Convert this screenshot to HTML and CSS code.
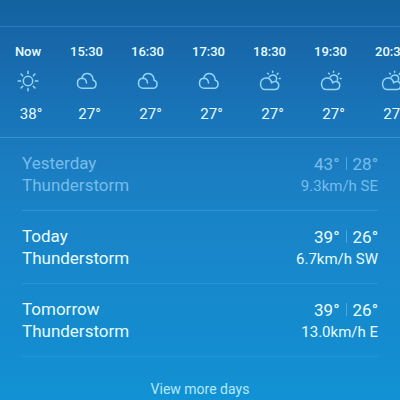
FILE: index.html
```
<!DOCTYPE html>
<html lang="en">
<head>
    <meta charset="UTF-8">
    <meta name="viewport" content="width=device-width, initial-scale=1.0">
    <title>Weather</title>
    <link rel="stylesheet" href="styles.css">
</head>
<body>
    <!-- Icons shared by the hourly forecast -->
    <svg class="icon-defs" aria-hidden="true">
        <symbol id="sun" viewBox="0 0 24 24">
            <circle cx="12" cy="12" r="4.7"/>
            <path d="M12 2.2v2.4M12 19.4v2.4M2.2 12h2.4M19.4 12h2.4M5.1 5.1l1.6 1.6M17.3 17.3l1.6 1.6M5.1 18.9l1.6-1.6M17.3 6.7l1.6-1.6"/>
        </symbol>
        <symbol id="cloud" viewBox="0 0 24 24">
            <path d="M7.2 19.3h9.8a4.1 4.1 0 0 0 1.2-8c.1-3.8-2.5-6.7-5.8-6.7-2.8 0-5 1.8-5.6 4.6-2.7.1-4.3 2.4-4.3 5 0 2.9 2 5.1 4.7 5.1zM6.8 9.2c3 0 4.6 1.9 4.7 4.9"/>
        </symbol>
        <symbol id="partly" viewBox="0 0 24 24">
            <path d="M7.2 20.5h9.6a4 4 0 0 0 .8-7.9c-1.5-.3-2.9.2-4 1.3-.5-3.1-2.7-4.9-5.5-4.9-3.4 0-5.6 2.5-5.6 5.8 0 3.4 2.1 5.7 4.7 5.7z"/>
            <path d="M11.2 8.2c.8-1.5 2-2.2 3.4-2.2 2.4 0 4 1.7 4 3.8 0 .5-.1 1-.3 1.4M14.6 2.2v1.1M9.6 4.2l.8.8M20 4.4l-.8.8M21.2 9.4h1"/>
        </symbol>
    </svg>

    <main class="weather">
        <section class="hourly">
            <div class="hour now">
                <span class="time">Now</span>
                <svg class="icon"><use href="#sun"/></svg>
                <span class="temp">38°</span>
            </div>
            <div class="hour">
                <span class="time">15:30</span>
                <svg class="icon"><use href="#cloud"/></svg>
                <span class="temp">27°</span>
            </div>
            <div class="hour">
                <span class="time">16:30</span>
                <svg class="icon"><use href="#cloud"/></svg>
                <span class="temp">27°</span>
            </div>
            <div class="hour">
                <span class="time">17:30</span>
                <svg class="icon"><use href="#cloud"/></svg>
                <span class="temp">27°</span>
            </div>
            <div class="hour">
                <span class="time">18:30</span>
                <svg class="icon"><use href="#partly"/></svg>
                <span class="temp">27°</span>
            </div>
            <div class="hour">
                <span class="time">19:30</span>
                <svg class="icon"><use href="#partly"/></svg>
                <span class="temp">27°</span>
            </div>
            <div class="hour">
                <span class="time">20:30</span>
                <svg class="icon"><use href="#partly"/></svg>
                <span class="temp">27°</span>
            </div>
        </section>

        <section class="daily">
            <div class="day past">
                <div class="summary">
                    <div>Yesterday</div>
                    <div>Thunderstorm</div>
                </div>
                <div class="details">
                    <div class="range"><span>43°</span><span class="low">28°</span></div>
                    <div class="wind">9.3km/h SE</div>
                </div>
            </div>
            <div class="day">
                <div class="summary">
                    <div>Today</div>
                    <div>Thunderstorm</div>
                </div>
                <div class="details">
                    <div class="range"><span>39°</span><span class="low">26°</span></div>
                    <div class="wind">6.7km/h SW</div>
                </div>
            </div>
            <div class="day">
                <div class="summary">
                    <div>Tomorrow</div>
                    <div>Thunderstorm</div>
                </div>
                <div class="details">
                    <div class="range"><span>39°</span><span class="low">26°</span></div>
                    <div class="wind">13.0km/h E</div>
                </div>
            </div>
        </section>

        <button type="button" class="more">View more days</button>
    </main>
</body>
</html>
```

FILE: styles.css
```
body {
    margin: 0;
    font-family: Roboto, "Liberation Sans", sans-serif;
    color: #e6fcff;
}

.icon-defs {
    display: none;
}

.weather {
    box-sizing: border-box;
    min-height: 100vh;
    padding-top: 26px;
    overflow: hidden;
    background: linear-gradient(#13629f 0%, #1767a9 10%, #1973b7 27%, #1b7fc3 45%, #1787ca 65%, #148ccf 85%, #1192d4 100%);
}

/* Hourly strip, runs off the right edge */
.hourly {
    display: flex;
    overflow: hidden;
    padding: 16px 0 11px;
    border-top: 1px solid #2b7bbb;
    border-bottom: 1px solid #3b8fcb;
}

.hour {
    flex: 0 0 61px;
    display: flex;
    flex-direction: column;
    align-items: center;
}

.hour.now {
    flex-basis: 56px;
}

.time {
    font-size: 13px;
    line-height: 17px;
    font-weight: 500;
}

.icon {
    width: 24px;
    height: 24px;
    margin: 9px 0;
    fill: none;
    stroke: #96d5fb;
    stroke-width: 1.5;
    stroke-linecap: round;
    stroke-linejoin: round;
}

.temp {
    padding-left: 6px;
    font-size: 15px;
    line-height: 24px;
}

.daily {
    padding: 0 22px;
}

.day {
    display: flex;
    justify-content: space-between;
    padding: 14px 0;
    border-bottom: 1px solid #2c93d3;
}

.day.past {
    color: #76bdeb;
}

.summary {
    font-size: 17px;
    line-height: 22px;
}

.details {
    text-align: right;
}

.range {
    display: flex;
    align-items: center;
    justify-content: flex-end;
    font-size: 17px;
    line-height: 24px;
}

/* Thin bar between the high and the low */
.low::before {
    content: "";
    display: inline-block;
    width: 1px;
    height: 13px;
    margin: 0 6px;
    background: #4aa8df;
}

.wind {
    font-size: 15px;
    line-height: 20px;
}

.more {
    display: block;
    width: 100%;
    padding: 22px 0 0;
    border: none;
    background: none;
    font-family: inherit;
    font-size: 14px;
    line-height: 20px;
    color: #b5e8fa;
    cursor: pointer;
}
```
